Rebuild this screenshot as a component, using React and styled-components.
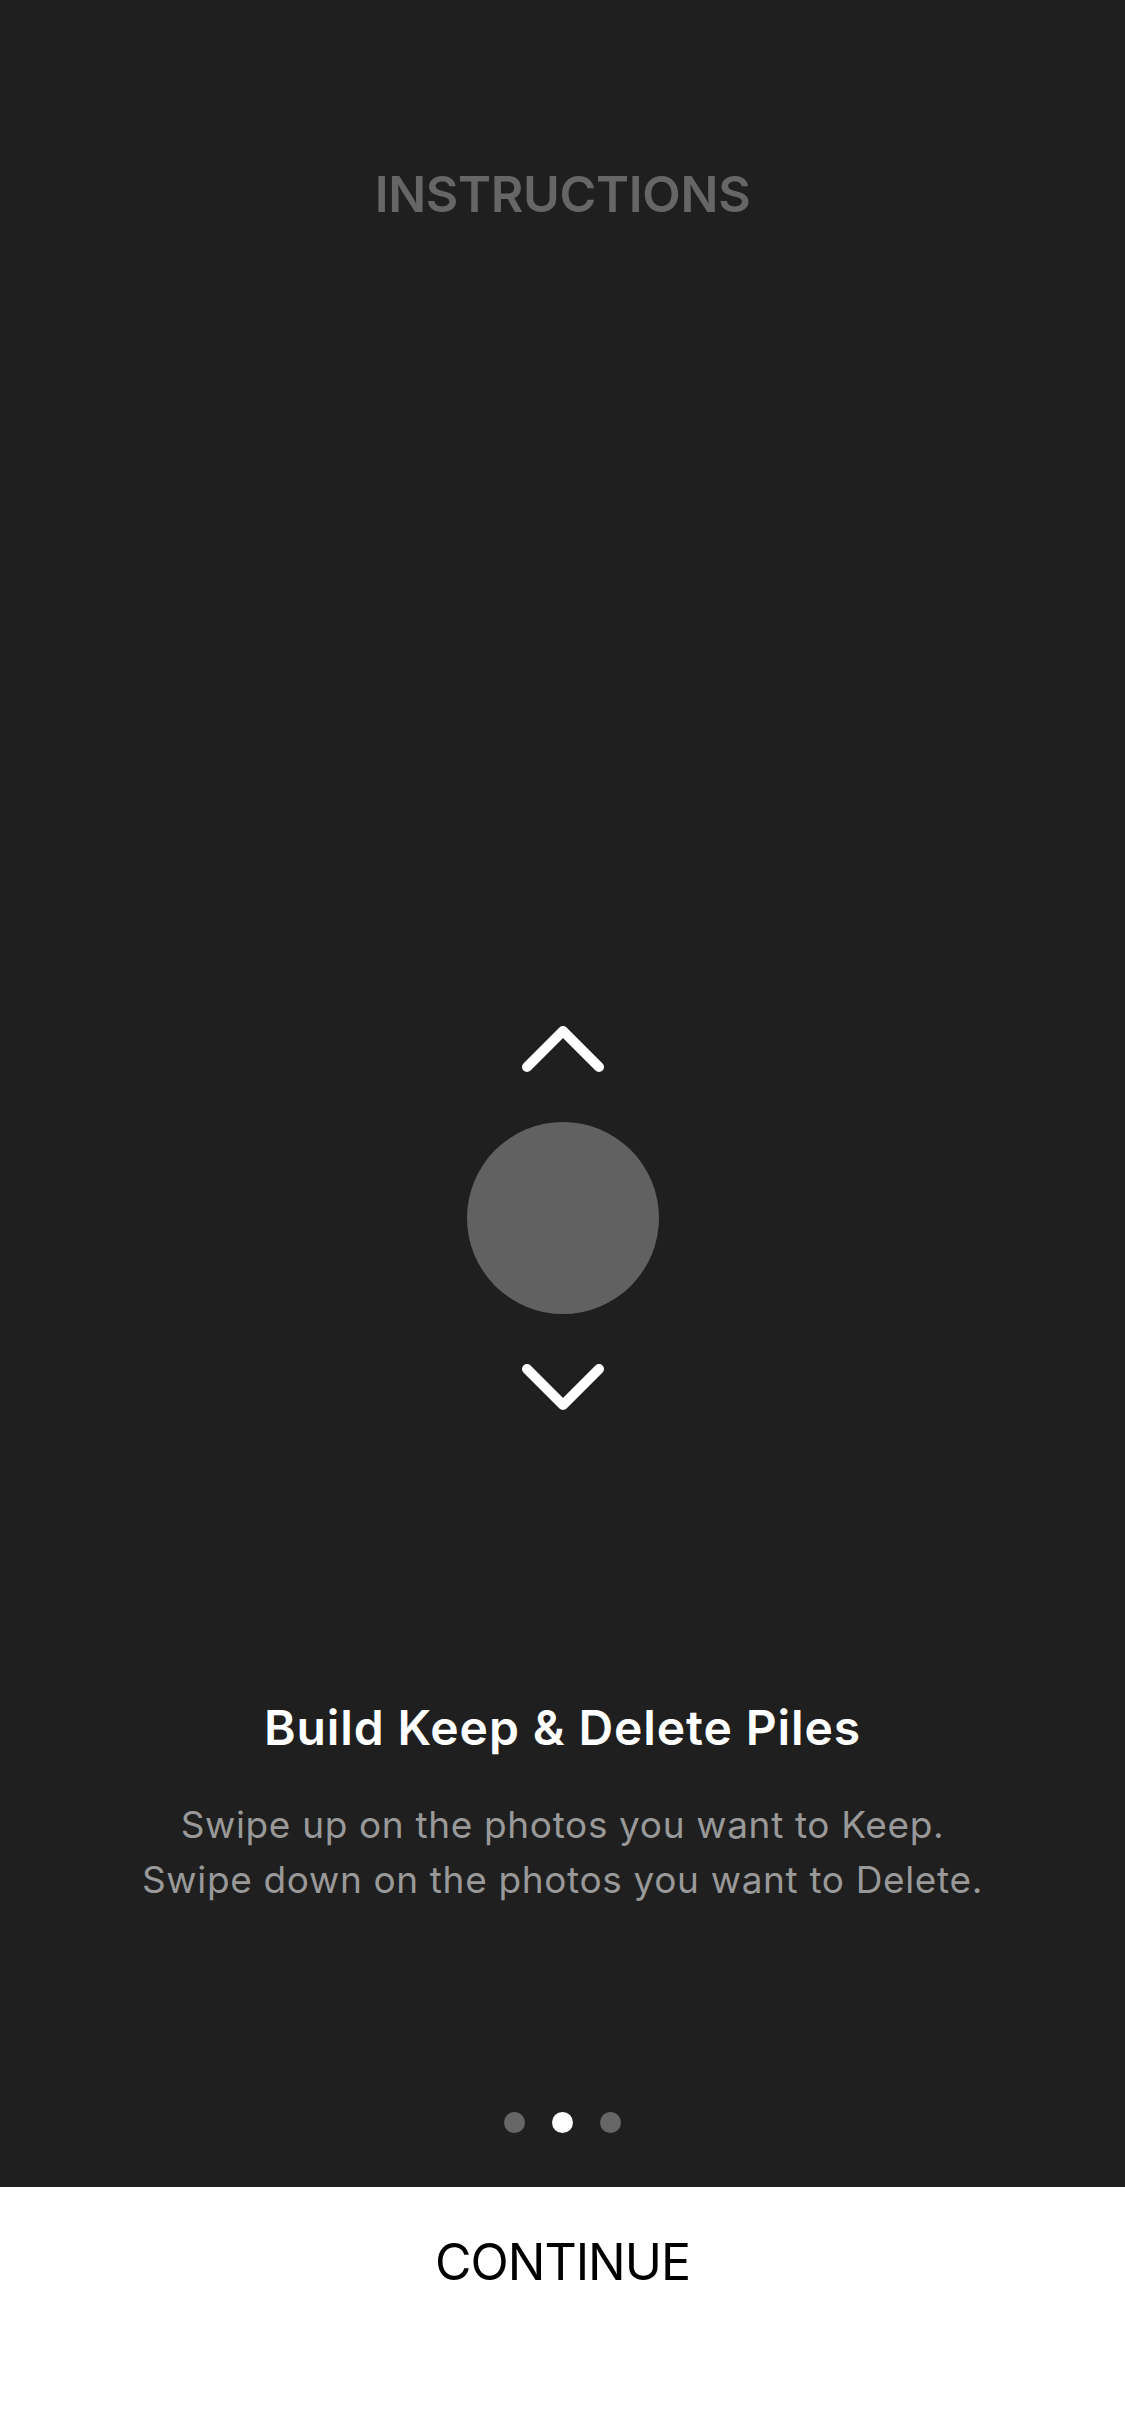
import React from "react";
import styled, { createGlobalStyle } from "styled-components";

const GlobalStyle = createGlobalStyle`
  html, body {
    margin: 0;
    padding: 0;
    background: #1f1f1f;
  }
  body {
    font-family: Inter, "Noto Sans", "Liberation Sans", sans-serif;
    -webkit-font-smoothing: antialiased;
  }
`;

const Screen = styled.div`
  width: 1125px;
  height: 2436px;
  display: flex;
  flex-direction: column;
  background-color: #1f1f1f;
  overflow: hidden;
`;

const Header = styled.h1`
  margin: 169px 0 0;
  height: 50px;
  line-height: 50px;
  font-size: 50px;
  font-weight: 600;
  color: #666666;
  text-align: center;
  letter-spacing: -0.3px;
`;

const Gesture = styled.div`
  margin-top: 806px;
  display: flex;
  flex-direction: column;
  align-items: center;
  gap: 49px;
`;

const Chevron = styled.svg`
  display: block;
  width: 84px;
  height: 48px;
  margin-left: 1px;
`;

const Thumb = styled.div`
  width: 192px;
  height: 192px;
  border-radius: 50%;
  background-color: #616161;
`;

const Copy = styled.div`
  margin-top: 293px;
  display: flex;
  flex-direction: column;
  align-items: center;
  text-align: center;
`;

const Title = styled.h2`
  margin: 0;
  height: 48px;
  line-height: 48px;
  font-size: 48px;
  font-weight: 600;
  color: #ffffff;
  letter-spacing: 0.9px;
`;

const Description = styled.p`
  margin: 45px 0 0;
  line-height: 55px;
  font-size: 37px;
  font-weight: 400;
  color: #999999;
  letter-spacing: 0.65px;
`;

const Dots = styled.div`
  margin-top: auto;
  margin-bottom: 54px;
  display: flex;
  justify-content: center;
  gap: 27px;
`;

const Dot = styled.span`
  width: 21px;
  height: 21px;
  border-radius: 50%;
  background-color: ${(props) => (props.active ? "#ffffff" : "#666666")};
`;

const Footer = styled.div`
  height: 249px;
  flex-shrink: 0;
  background-color: #ffffff;
  display: flex;
  justify-content: center;
  padding-top: 50px;
  box-sizing: border-box;
`;

const ContinueButton = styled.button`
  height: 50px;
  line-height: 50px;
  padding: 0;
  border: none;
  background: none;
  font-family: inherit;
  font-size: 50px;
  font-weight: 400;
  color: #000000;
  letter-spacing: -1px;
`;

const ChevronIcon = ({ down }) => (
  <Chevron viewBox="0 0 84 48">
    <path
      d={down ? "M6 6 L42 42 L78 6" : "M6 42 L42 6 L78 42"}
      fill="none"
      stroke="#ffffff"
      strokeWidth="10"
      strokeLinecap="round"
      strokeLinejoin="round"
    />
  </Chevron>
);

const App = () => {
  return (
    <Screen>
      <GlobalStyle />
      <Header>INSTRUCTIONS</Header>
      <Gesture>
        <ChevronIcon />
        <Thumb />
        <ChevronIcon down />
      </Gesture>
      <Copy>
        <Title>Build Keep &amp; Delete Piles</Title>
        <Description>
          Swipe up on the photos you want to Keep.
          <br />
          Swipe down on the photos you want to Delete.
        </Description>
      </Copy>
      <Dots>
        <Dot />
        <Dot active />
        <Dot />
      </Dots>
      <Footer>
        <ContinueButton>CONTINUE</ContinueButton>
      </Footer>
    </Screen>
  );
};

export default App;
